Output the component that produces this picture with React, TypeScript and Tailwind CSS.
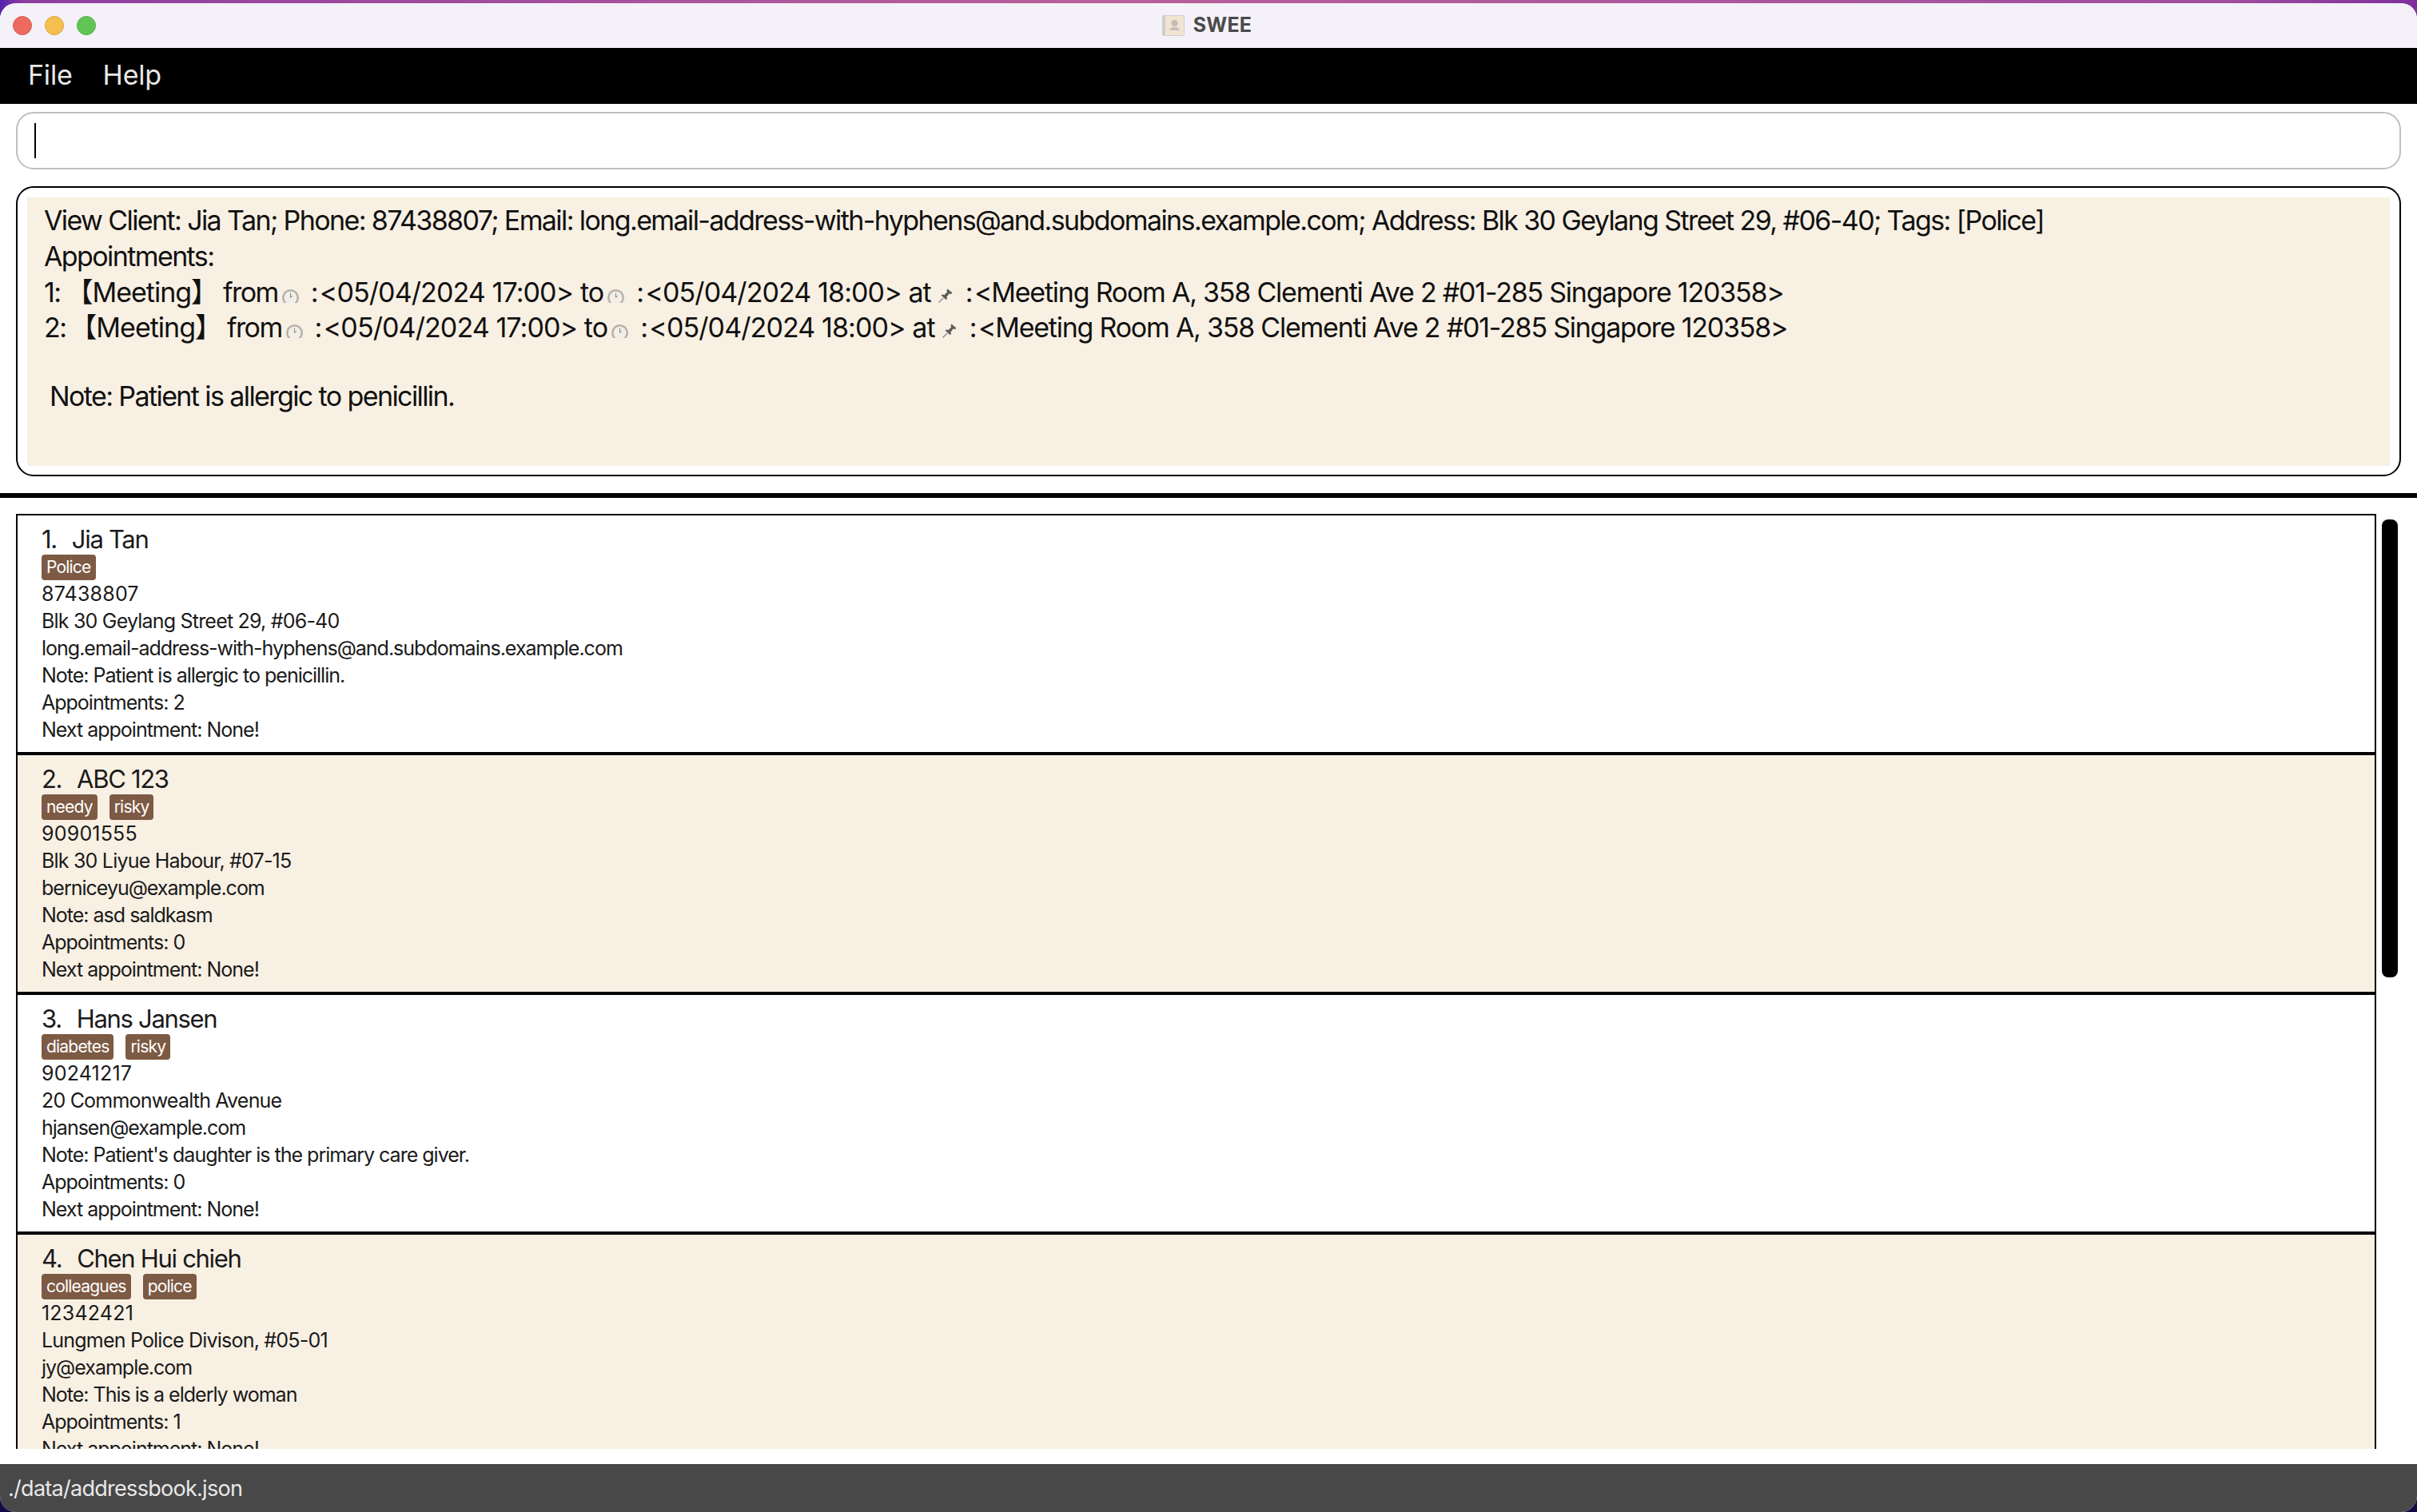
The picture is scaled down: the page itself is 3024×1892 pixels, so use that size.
import React from 'react'

type Person = {
  num: string
  name: string
  tags: string[]
  phone: string
  address: string
  email: string
  note: string
  appts: number
}

const people: Person[] = [
  { num: '1.', name: 'Jia Tan', tags: ['Police'], phone: '87438807', address: 'Blk 30 Geylang Street 29, #06-40', email: 'long.email-address-with-hyphens@and.subdomains.example.com', note: 'Note: Patient is allergic to penicillin.', appts: 2 },
  { num: '2.', name: 'ABC 123', tags: ['needy', 'risky'], phone: '90901555', address: 'Blk 30 Liyue Habour, #07-15', email: 'berniceyu@example.com', note: 'Note: asd saldkasm', appts: 0 },
  { num: '3.', name: 'Hans Jansen', tags: ['diabetes', 'risky'], phone: '90241217', address: '20 Commonwealth Avenue', email: 'hjansen@example.com', note: "Note: Patient's daughter is the primary care giver.", appts: 0 },
  { num: '4.', name: 'Chen Hui chieh', tags: ['colleagues', 'police'], phone: '12342421', address: 'Lungmen Police Divison, #05-01', email: 'jy@example.com', note: 'Note: This is a elderly woman', appts: 1 },
]

// clock emoji, cut off flat at the bottom like in the app
const Clock = () => (
  <svg viewBox="0 0 21 17" className="inline-block w-[21px] h-[17px] ml-[5px] mt-[18px] shrink-0">
    <circle cx="10.500" cy="10.500" r="10.500" fill="#b5b1a8" />
    <circle cx="10.500" cy="10.500" r="8" fill="#f2efe9" />
    <path d="M10.500 4.500V10.500L13 8" stroke="#87847e" strokeWidth="1" fill="none" />
  </svg>
)

const Pin = () => (
  <svg viewBox="0 0 18 18" className="inline-block w-[18px] h-[18px] ml-[9px] mt-[17px] shrink-0">
    <path d="M11.500 0.500l6 5-1.500 1.500-2.500-.5-3 4 .5 2.500-1.500 1-6-5.500 1.500-1 2.500.5 3.500-3.500-.5-2.500z" fill="#5c5c5c" />
    <path d="M6 12L0.500 17.500" stroke="#8f8f8f" strokeWidth="1.500" />
  </svg>
)

const BookIcon = () => (
  <svg viewBox="0 0 28 26" className="w-[28px] h-[26px] opacity-60">
    <rect x="0" y="0" width="28" height="26" rx="2" fill="#b9b4bd" />
    <rect x="4" y="1" width="23" height="24" rx="1" fill="#f0deb9" />
    <circle cx="15.500" cy="10" r="4" fill="#a29a8f" />
    <path d="M9 19c1-3 3-3.500 4.500-4h4c1.500.5 3.500 1 4.500 4z" fill="#a29a8f" />
  </svg>
)

const Appointment = ({ index, gap }: { index: number; gap: string }) => (
  <div className="h-[44px] flex items-start whitespace-pre">
    <span>{index}:</span>
    <span className={`${gap} tracking-[-1px]`}>【Meeting】</span>
    <span className="ml-[7px]">from</span>
    <Clock />
    <span className="ml-[7px]"> :</span>
    <span className="ml-[3px] tracking-[-0.9px]">&lt;05/04/2024 17:00&gt; to</span>
    <Clock />
    <span className="ml-[7px]"> :</span>
    <span className="ml-[3px] tracking-[-0.9px]">&lt;05/04/2024 18:00&gt; at</span>
    <Pin />
    <span className="ml-[8px]"> :</span>
    <span className="ml-[3px] tracking-[-1.23px]">&lt;Meeting Room A, 358 Clementi Ave 2 #01-285 Singapore 120358&gt;</span>
  </div>
)

const Card = ({ person, shaded }: { person: Person; shaded: boolean }) => (
  <div className={`shrink-0 h-[300px] border-b-[4px] border-black pl-[30px] pt-[11px] text-[#1a1a1a] ${shaded ? 'bg-[#f8f0e3]' : 'bg-white'}`}>
    <div className="h-[38px] leading-[38px] text-[31px] tracking-[-1.3px] whitespace-pre">
      <span>{person.num}  </span>
      <span className="ml-[4px]">{person.name}</span>
    </div>
    <div className="flex gap-[15px] h-[32px] items-start">
      {person.tags.map((t) => (
        <span key={t} className="h-[32px] leading-[32px] px-[6px] rounded-[4px] bg-[#7d5a44] text-white text-[21px] tracking-[-0.8px]">{t}</span>
      ))}
    </div>
    <div className="text-[25px] leading-[34px] tracking-[-1px]">
      <div className="tracking-[0.2px]">{person.phone}</div>
      <div className="tracking-[-0.8px]">{person.address}</div>
      <div>{person.email}</div>
      <div>{person.note}</div>
      <div>Appointments: {person.appts}</div>
      <div>Next appointment: None!</div>
    </div>
  </div>
)

export default function App() {
  return (
    <div className="h-[1892px] w-[3024px] overflow-hidden bg-[#140a4a] bg-[linear-gradient(90deg,#5522ad_0%,#8f3fa0_1%,#b9609a_45%,#a04f9f_92%,#7f2f9c_100%)] bg-no-repeat bg-[length:100%_30px] pt-[4px] font-['Inter','Noto_Sans_CJK_SC',sans-serif]">
      <div className="h-[1888px] rounded-[20px] overflow-hidden bg-white flex flex-col">
        {/* Title bar */}
        <div className="relative h-[56px] shrink-0 bg-[#f4f2f8] flex items-center justify-center gap-[11px] pr-[4px]">
          <div className="absolute left-[16px] top-[16px] flex gap-[16px]">
            <div className="w-[24px] h-[24px] rounded-full bg-[#ee6a5f] border border-[#d65a50]" />
            <div className="w-[24px] h-[24px] rounded-full bg-[#f5bf4f] border border-[#dba53e]" />
            <div className="w-[24px] h-[24px] rounded-full bg-[#61c554] border border-[#54ad48]" />
          </div>
          <BookIcon />
          <span className="text-[25px] font-bold text-[#4a4a4a] tracking-[0.2px]">SWEE</span>
        </div>

        {/* Menu */}
        <div className="h-[70px] shrink-0 bg-black text-[#e8e8e8] text-[34px] tracking-[-0.2px] flex items-center gap-[38px] pl-[35px] pb-[4px]">
          <span>File</span>
          <span>Help</span>
        </div>

        {/* Command box */}
        <div className="shrink-0 px-[20px] pt-[10px]">
          <div className="h-[72px] border-2 border-[#bfbfbf] rounded-[22px] flex items-center pl-[21px]">
            <div className="w-[2px] h-[44px] bg-black" />
          </div>
        </div>

        {/* Result box */}
        <div className="shrink-0 px-[20px] pt-[21px]">
          <div className="h-[363px] border-2 border-black rounded-[22px] p-[12px]">
            <div className="h-[336px] bg-[#f8f0e3] pl-[21px] pt-[7px] text-[34px] leading-[44px] tracking-[-1.6px] text-[#111111]">
              <div className="whitespace-pre">View Client: Jia Tan; Phone: 87438807; Email: long.email-address-with-hyphens@and.subdomains.example.com; Address: Blk 30 Geylang Street 29, #06-40; Tags: [Police]</div>
              <div className="mt-[1px]">Appointments:</div>
              <div className="mt-[1px]">
                <Appointment index={1} gap="ml-[7px]" />
                <Appointment index={2} gap="ml-[5px]" />
              </div>
              <div className="h-[42px]" />
              <div className="pl-[7px]">Note: Patient is allergic to penicillin.</div>
            </div>
          </div>
        </div>

        {/* Divider */}
        <div className="shrink-0 h-[6px] mt-[21px] bg-black" />

        {/* Client list */}
        <div className="flex h-[1190px] shrink-0 pt-[20px] pl-[20px] overflow-hidden">
          <div className="w-[2953px] flex flex-col overflow-hidden border-t-2 border-x-2 border-black">
            {people.map((p, i) => (
              <Card key={p.num} person={p} shaded={i % 2 === 1} />
            ))}
          </div>
          <div className="ml-[7px] mt-[7px] w-[20px] h-[573px] rounded-[8px] bg-black" />
        </div>

        {/* Status bar */}
        <div className="mt-auto h-[60px] shrink-0 bg-[#484848] text-[#e8e8e8] text-[27px] tracking-[-0.72px] flex items-center pl-[10px] pt-[2px]">
          ./data/addressbook.json
        </div>
      </div>
    </div>
  )
}
